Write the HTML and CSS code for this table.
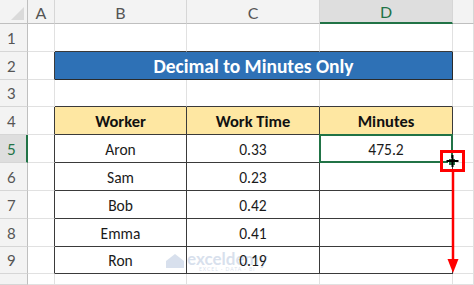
FILE: index.html
```html
<!DOCTYPE html>
<html>
<head>
<meta charset="utf-8">
<link rel="stylesheet" href="styles.css">
</head>
<body>
<div class="sheet">
  <div class="hd corner"><span class="tri"></span></div>
  <div class="hd col">A</div>
  <div class="hd col">B</div>
  <div class="hd col">C</div>
  <div class="hd col sel-col">D</div>
  <div class="hd col"></div>

  <div class="hd row">1</div>
  <div class="c"></div><div class="c bb"></div><div class="c bb"></div><div class="c bb"></div><div class="c"></div>

  <div class="hd row">2</div>
  <div class="c br"></div>
  <div class="c title">Decimal to Minutes Only</div>
  <div class="c"></div>

  <div class="hd row">3</div>
  <div class="c"></div><div class="c bb"></div><div class="c bb"></div><div class="c bb"></div><div class="c"></div>

  <div class="hd row">4</div>
  <div class="c br"></div>
  <div class="c t th">Worker</div><div class="c t th">Work Time</div><div class="c t th">Minutes</div>
  <div class="c"></div>

  <div class="hd row sel-row">5</div>
  <div class="c br"></div>
  <div class="c t">Aron</div><div class="c t">0.33</div>
  <div class="c t active">475.2
    <span class="handle"></span>
    <span class="redbox"><svg width="25" height="22" viewBox="0 0 25 22"><path d="M12.5 5v12M6.5 11h12" stroke="#000" stroke-width="2"/></svg></span>
    <svg class="arrow" width="14" height="102" viewBox="0 0 14 102"><path d="M7 0v90" stroke="#ff0000" stroke-width="2.5"/><path d="M1.5 87h11L7 101z" fill="#ff0000"/></svg>
  </div>
  <div class="c"></div>

  <div class="hd row">6</div>
  <div class="c br"></div>
  <div class="c t">Sam</div><div class="c t">0.23</div><div class="c t"></div>
  <div class="c"></div>

  <div class="hd row">7</div>
  <div class="c br"></div>
  <div class="c t">Bob</div><div class="c t">0.42</div><div class="c t"></div>
  <div class="c"></div>

  <div class="hd row">8</div>
  <div class="c br"></div>
  <div class="c t">Emma</div><div class="c t">0.41</div><div class="c t"></div>
  <div class="c"></div>

  <div class="hd row">9</div>
  <div class="c br"></div>
  <div class="c t">Ron</div><div class="c t wm-host"><span class="val">0.19</span><span class="wm"><svg width="20" height="16" viewBox="0 0 20 16"><path d="M1 9L10 2l9 7v7H1z" fill="#9fb4d3"/></svg><span class="wm-text">exceldemy<span class="wm-sub">EXCEL · DATA · BI</span></span></span></div><div class="c t"></div>
  <div class="c"></div>

  <div class="hd row"></div>
  <div class="c"></div><div class="c"></div><div class="c"></div><div class="c"></div><div class="c"></div>
</div>
</body>
</html>
```

FILE: styles.css
```css
html, body {
  margin: 0;
  padding: 0;
  background: #ffffff;
}
body {
  width: 474px;
  height: 285px;
  overflow: hidden;
  font-family: "Carlito", "Calibri", "Lato", sans-serif;
}
.sheet {
  display: grid;
  grid-template-columns: 28px 27px 132px 133px 133px 21px;
  grid-template-rows: 24px 28px 28px 27px 28px 28px 28px 28px 28px 27px 11px;
  width: 474px;
  height: 285px;
}
.c {
  box-sizing: border-box;
  border-right: 1px solid #e1e1e1;
  border-bottom: 1px solid #e1e1e1;
  display: flex;
  align-items: center;
  justify-content: center;
  font-size: 15.5px;
  color: #1a1a1a;
}
.hd {
  box-sizing: border-box;
  background: #f3f3f3;
  border-right: 1px solid #d6d6d6;
  border-bottom: 1px solid #d6d6d6;
  color: #555555;
  display: flex;
  align-items: center;
  justify-content: center;
  font-family: "Lato", "Liberation Sans", sans-serif;
}
.col {
  font-size: 16px;
  border-bottom-color: #bfbfbf;
  padding-top: 1px;
}
.row {
  font-size: 15px;
  border-right-color: #bfbfbf;
  justify-content: flex-start;
  padding-left: 7px;
}
.corner {
  position: relative;
  border-bottom-color: #bfbfbf;
  border-right-color: #bfbfbf;
}
.tri {
  position: absolute;
  right: 3px;
  bottom: 3px;
  width: 0;
  height: 0;
  border-left: 13px solid transparent;
  border-bottom: 13px solid #dadada;
}
.sel-col {
  background: #dedede;
  border-bottom: 2px solid #217346;
  color: #217346;
}
.sel-row {
  background: #dedede;
  border-right: 2px solid #217346;
  color: #217346;
}
.bb { border-bottom-color: #3a3a3a; }
.br { border-right-color: #3a3a3a; }
.title {
  grid-column: span 3;
  background: #2e71b6;
  border-right-color: #2a2a2a;
  border-bottom-color: #2a2a2a;
  color: #ffffff;
  font-weight: 700;
  font-size: 19.5px;
  padding-top: 1px;
}
.t {
  border-right-color: #3a3a3a;
  border-bottom-color: #3a3a3a;
  padding-top: 1px;
}
.th {
  background: #fee7a2;
  font-weight: 700;
  font-size: 16.5px;
  color: #111111;
}
.active {
  position: relative;
}
.active::after {
  content: "";
  position: absolute;
  left: -1px;
  top: -1px;
  right: -1px;
  bottom: -1px;
  border: 2px solid #217346;
}
.handle {
  position: absolute;
  right: -4px;
  bottom: -4px;
  width: 6px;
  height: 6px;
  background: #217346;
  border: 1px solid #fff;
  z-index: 1;
}
.redbox {
  position: absolute;
  left: 120px;
  top: 15px;
  width: 25px;
  height: 22px;
  box-sizing: border-box;
  border: 3px solid #ff0000;
  z-index: 2;
}
.redbox svg {
  position: absolute;
  left: -3px;
  top: -3px;
}
.arrow {
  position: absolute;
  left: 126px;
  top: 37px;
  z-index: 2;
}
.wm-host {
  position: relative;
}
.val {
  position: relative;
  z-index: 1;
}
.wm {
  position: absolute;
  left: -22px;
  top: 5px;
  display: flex;
  align-items: flex-start;
  gap: 2px;
  opacity: 0.4;
  pointer-events: none;
}
.wm-text {
  display: flex;
  flex-direction: column;
  align-items: center;
  font-family: "Lato", sans-serif;
  font-weight: 700;
  font-size: 17px;
  line-height: 14px;
  color: #9fb4d3;
}
.wm-sub {
  font-size: 5px;
  line-height: 6px;
  letter-spacing: 1px;
  font-weight: 400;
}
```
